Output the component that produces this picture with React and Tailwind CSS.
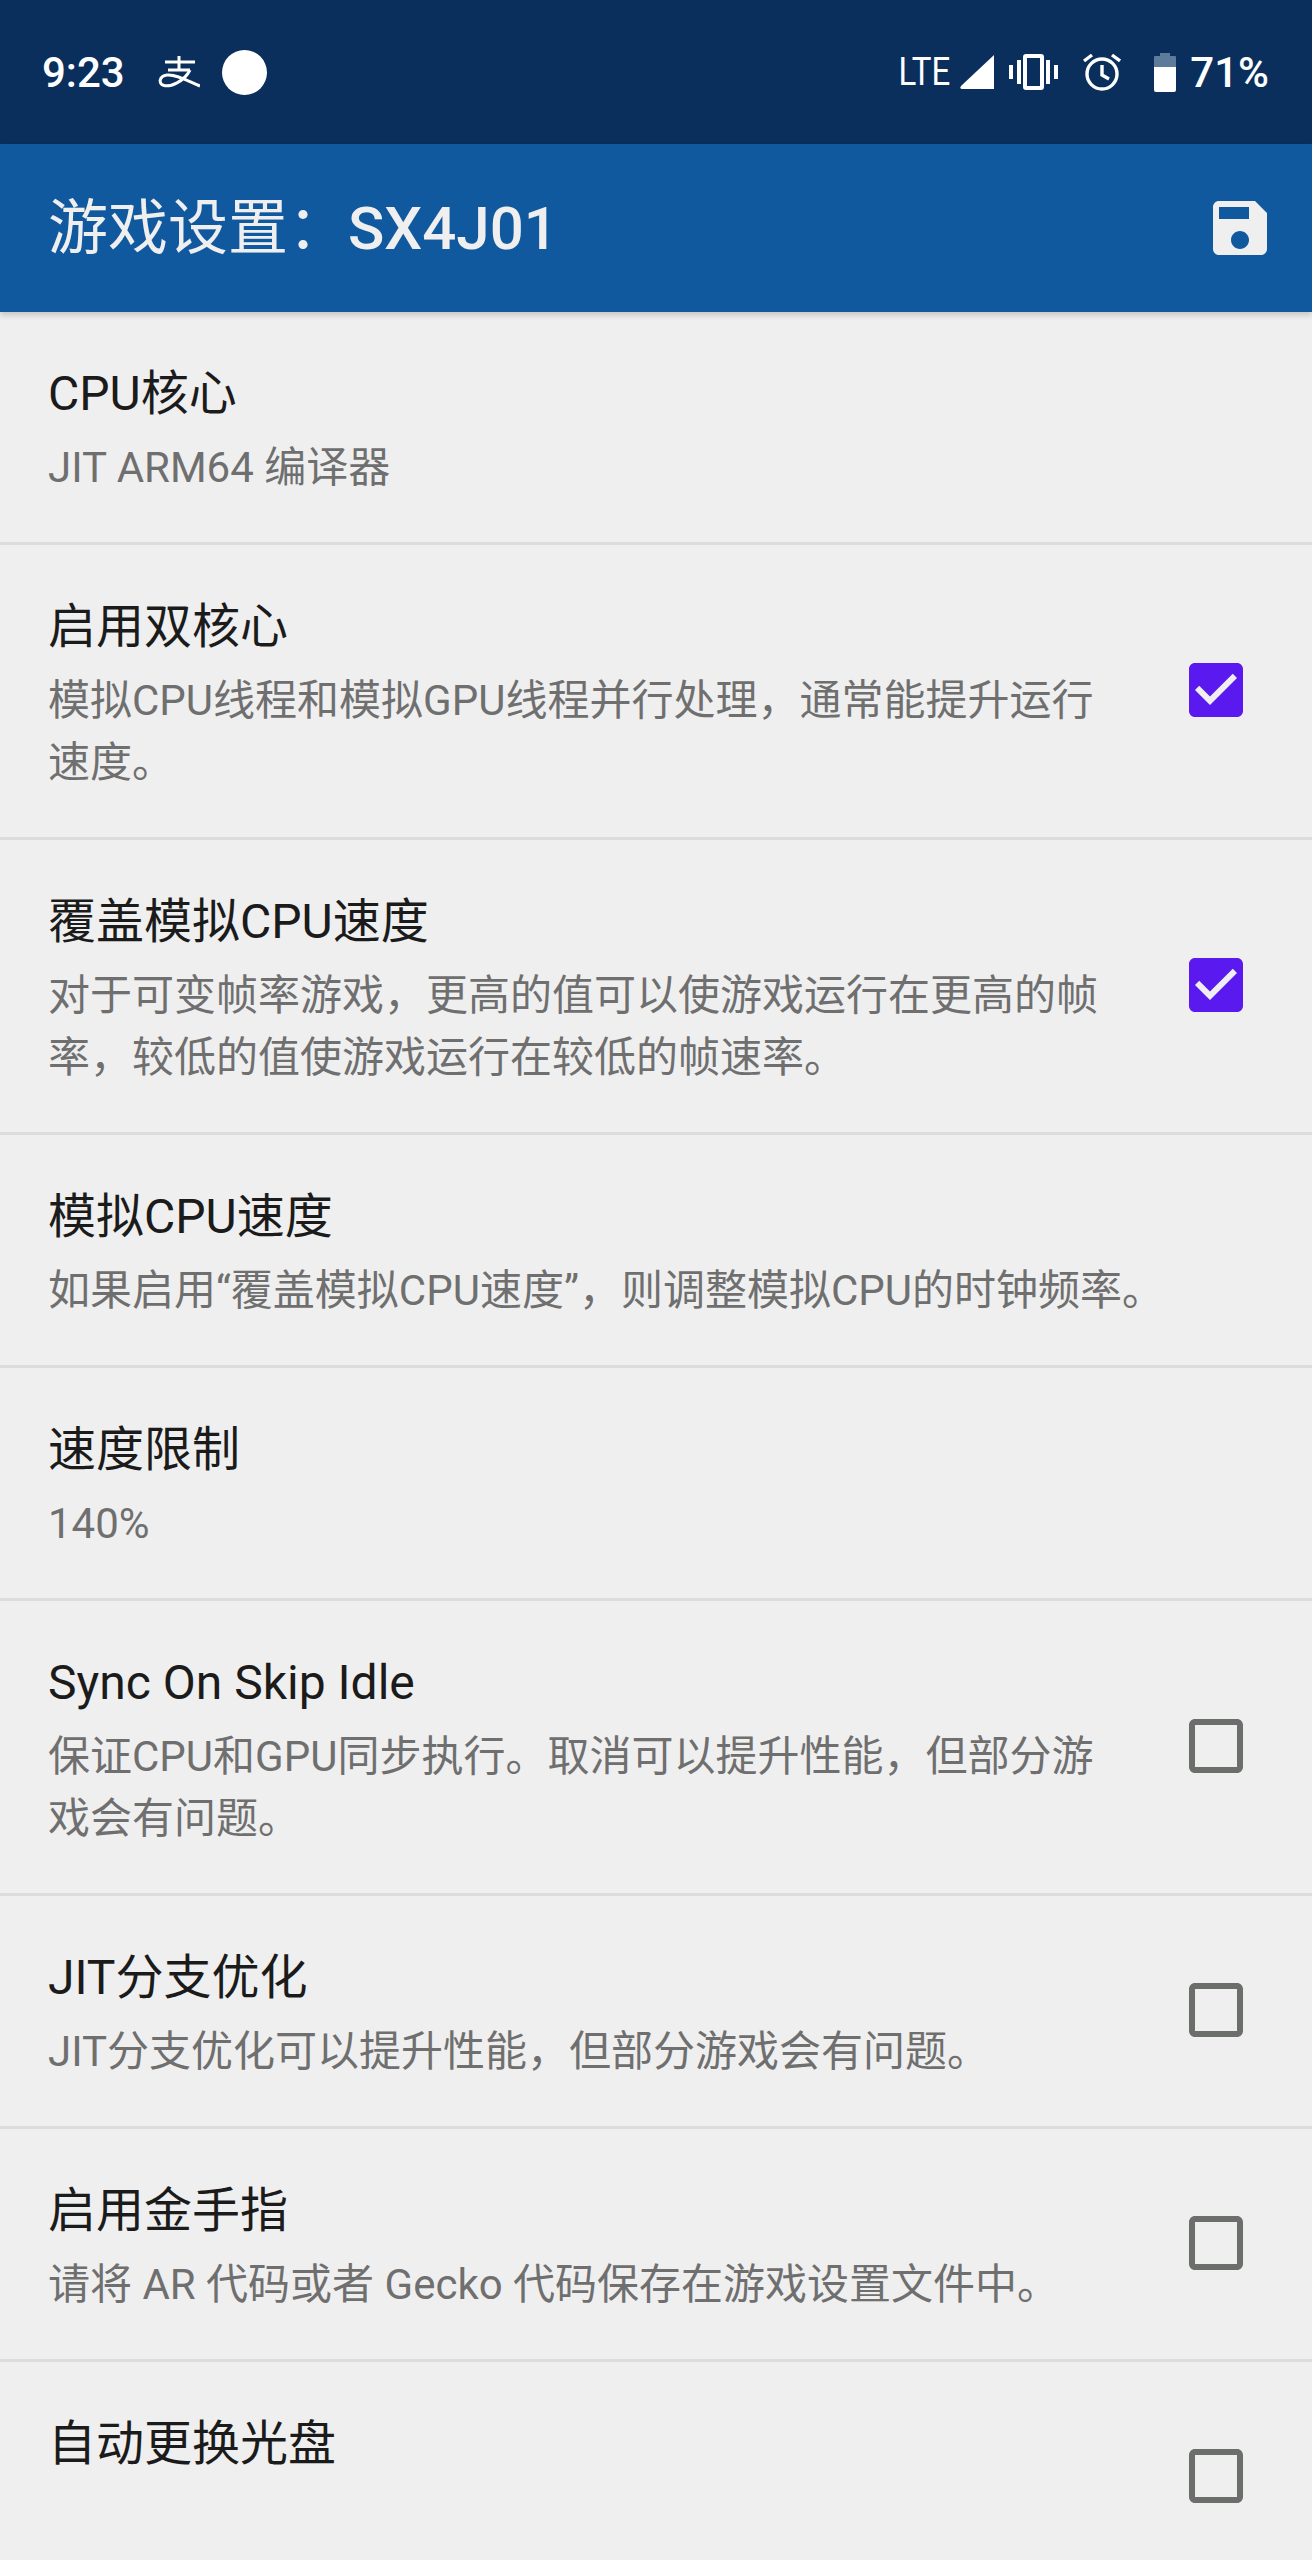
const sans = "font-['Roboto','Noto_Sans_CJK_SC',sans-serif]"

const rows = [
  { title: "CPU核心", desc: "JIT ARM64 编译器" },
  { title: "启用双核心", desc: "模拟CPU线程和模拟GPU线程并行处理，通常能提升运行速度。", checked: true },
  { title: "覆盖模拟CPU速度", desc: "对于可变帧率游戏，更高的值可以使游戏运行在更高的帧率，较低的值使游戏运行在较低的帧速率。", checked: true },
  { title: "模拟CPU速度", desc: "如果启用“覆盖模拟CPU速度”，则调整模拟CPU的时钟频率。" },
  { title: "速度限制", desc: "140%" },
  { title: "Sync On Skip Idle", desc: "保证CPU和GPU同步执行。取消可以提升性能，但部分游戏会有问题。", checked: false },
  { title: "JIT分支优化", desc: "JIT分支优化可以提升性能，但部分游戏会有问题。", checked: false },
  { title: "启用金手指", desc: "请将 AR 代码或者 Gecko 代码保存在游戏设置文件中。", checked: false },
  { title: "自动更换光盘", desc: "\u00a0", checked: false },
]

const CheckBox = ({ checked }) => (
  <svg viewBox="0 0 24 24" className={checked ? "w-[72px] h-[72px] fill-[#5a1aef]" : "w-[72px] h-[72px] fill-[#6c6e6b]"}>
    {checked ? (
      <path d="M19 3H5c-1.11 0-2 .9-2 2v14c0 1.1.89 2 2 2h14c1.1 0 2-.9 2-2V5c0-1.1-.9-2-2-2zm-9 14l-5-5 1.41-1.41L10 14.17l7.59-7.59L19 8l-9 9z" />
    ) : (
      <path d="M19 5v14H5V5h14m0-2H5c-1.1 0-2 .9-2 2v14c0 1.1.9 2 2 2h14c1.1 0 2-.9 2-2V5c0-1.1-.9-2-2-2z" />
    )}
  </svg>
)

const Row = ({ title, desc, checked }) => (
  <div className="flex items-center border-b-[3px] border-[#dcdcdc] pl-[48px]">
    <div className="flex-1 pt-[50px] pb-[43px]">
      <div className="text-[48px] leading-[64px] text-[#1b1b1b]">{title}</div>
      <div className="mt-[11px] text-[42px] leading-[62px] text-[#6f6f6f] whitespace-pre-wrap">{desc}</div>
    </div>
    {checked !== undefined ? (
      <div className="w-[200px] flex justify-center pl-[8px] pb-[2px] shrink-0">
        <CheckBox checked={checked} />
      </div>
    ) : (
      <div className="w-[48px] shrink-0" />
    )}
  </div>
)

const StatusBar = () => (
  <div className="h-[144px] bg-[#0a2f5c] flex items-center justify-between pl-[42px] pr-[43px] text-white">
    <div className="flex items-center">
      <span className="text-[42px] font-medium">9:23</span>
      <svg viewBox="0 0 42 32" className="w-[42px] h-[32px] ml-[33px]" fill="none" stroke="white">
        <path d="M7 6H37M21 0V14M10 14H32" strokeWidth="3" />
        <path d="M32 14C26 26 12 31 6 29.5C0 28 1 20 9 19C18 18 30 25 42 30" strokeWidth="3" />
      </svg>
      <div className="w-[45px] h-[45px] rounded-full bg-white ml-[22px]" />
    </div>
    <div className="flex items-center">
      <span className="inline-block text-[33px] scale-y-[1.15]">LTE</span>
      <svg viewBox="0 0 34 34" className="w-[34px] h-[34px] ml-[10px]" fill="white">
        <path d="M34 0V34H2C0 34 0 32 1 31Z" />
      </svg>
      <svg viewBox="0 0 49 36" className="w-[49px] h-[36px] ml-[15px]" fill="white">
        <path d="M0 11H4V25H0ZM8 6H12V30H8ZM37 6H41V30H37ZM45 11H49V25H45Z" />
        <path fillRule="evenodd" d="M17 0H32Q35 0 35 3V33Q35 36 32 36H17Q14 36 14 33V3Q14 0 17 0ZM18 4V32H31V4Z" />
      </svg>
      <svg viewBox="0 0 38 38" className="w-[38px] h-[38px] ml-[25px]" fill="none" stroke="white" strokeWidth="3.4">
        <circle cx="19" cy="21" r="15" />
        <path d="M19 12V22L26 26M1 8L9 2M37 8L29 2" />
      </svg>
      <svg viewBox="0 0 22 39" className="w-[22px] h-[39px] ml-[33px]">
        <path d="M6 0H16V3H21Q22 3 22 4V14H0V4Q0 3 1 3H6Z" fill="#5f7b9b" />
        <path d="M0 14H22V37Q22 39 20 39H2Q0 39 0 37Z" fill="white" />
      </svg>
      <span className="text-[42px] font-medium ml-[14px]">71%</span>
    </div>
  </div>
)

const Toolbar = () => (
  <div className="relative z-10 h-[168px] bg-[#11599e] flex items-center justify-between pl-[48px] pr-[36px] text-[#efefef] shadow-[0_3px_6px_rgba(0,0,0,0.18)]">
    <span className="text-[60px] pt-[2px]">
      游戏设置：<span className="font-medium">SX4J01</span>
    </span>
    <svg viewBox="0 0 24 24" className="w-[72px] h-[72px] fill-[#efefef]">
      <path d="M17 3H5c-1.11 0-2 .9-2 2v14c0 1.1.89 2 2 2h14c1.1 0 2-.9 2-2V7l-4-4zm-5 16c-1.66 0-3-1.34-3-3s1.34-3 3-3 3 1.34 3 3-1.34 3-3 3zm3-10H5V5h10v4z" />
    </svg>
  </div>
)

const App = () => {
  return (
    <div className={`${sans} h-[2560px] overflow-hidden bg-[#efefef]`}>
      <StatusBar />
      <Toolbar />
      {rows.map((row, i) => (
        <Row key={i} {...row} />
      ))}
    </div>
  )
}

export default App
